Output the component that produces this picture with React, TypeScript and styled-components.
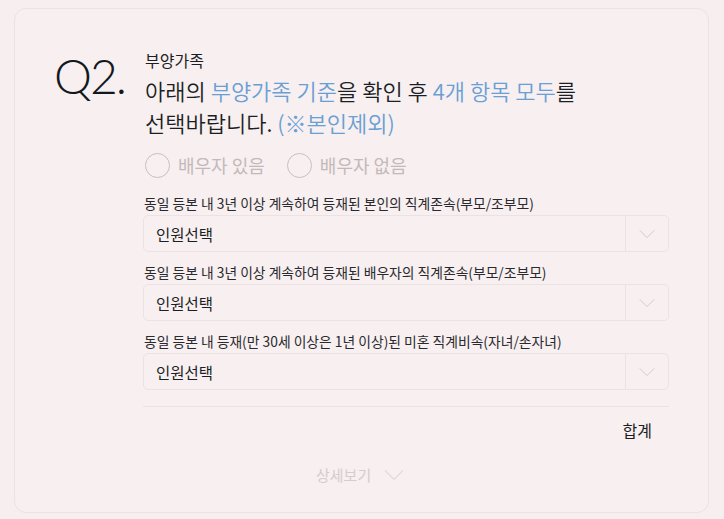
import React from "react";
import styled, { createGlobalStyle } from "styled-components";

const Global = createGlobalStyle`
  html, body { margin: 0; padding: 0; background: #f6eeef; }
  body { font-family: "Noto Sans CJK KR", "Noto Sans", sans-serif; color: #1b1f24; }
`;

const Page = styled.div`
  padding: 8px 14px 6px 14px;
`;

const Card = styled.div`
  width: 695px;
  height: 505px;
  box-sizing: border-box;
  border: 1px solid #ebe2e3;
  border-radius: 12px;
  background: #f7eff0;
  display: flex;
  padding: 40px 39px 0 39px;
`;

const QMark = styled.div`
  width: 89px;
  font-family: Lato, "Open Sans", sans-serif;
  font-weight: 300;
  font-size: 48px;
  line-height: 1;
  letter-spacing: -2px;
  color: #111820;
  padding-top: 3px;
  box-sizing: border-box;
`;

const Body = styled.div`
  flex: 1;
  display: flex;
  flex-direction: column;
`;

const Title = styled.div`
  font-size: 16px;
  font-weight: 400;
  line-height: 22px;
  padding-left: 2px;
`;

const Lead = styled.div`
  font-size: 22px;
  line-height: 32px;
  padding-left: 2px;
  margin-top: 3px;
  font-weight: 350;
`;

const Hi = styled.span`
  color: #6a9fd4;
`;

const Radios = styled.div`
  display: flex;
  gap: 22px;
  margin-top: 14px;
  padding-left: 2px;
  height: 26px;
  align-items: center;
`;

const RadioItem = styled.label`
  display: flex;
  align-items: center;
  gap: 8px;
  font-size: 18px;
  color: #c4b9b9;
`;

const Circle = styled.span`
  width: 25px;
  height: 25px;
  border-radius: 50%;
  border: 1px solid #c9c0c0;
  box-sizing: border-box;
`;

const Group = styled.div<{ $first?: boolean }>`
  margin-top: ${(p) => (p.$first ? "16px" : "11px")};
`;

const Label = styled.div`
  font-size: 13.8px;
  line-height: 18px;
  padding-left: 1px;
  color: #2a2a2e;
`;

const Select = styled.div`
  margin-top: 3px;
  height: 37px;
  box-sizing: border-box;
  border: 1px solid #ebe2e3;
  border-radius: 5px;
  display: flex;
  align-items: stretch;
`;

const SelectText = styled.div`
  flex: 1;
  display: flex;
  align-items: center;
  padding-left: 12px;
  font-size: 15.5px;
`;

const Arrow = styled.div`
  width: 42px;
  border-left: 1px solid #ebe2e3;
  display: flex;
  align-items: center;
  justify-content: center;
`;

const Divider = styled.div`
  height: 1px;
  background: #ebe2e3;
  margin-top: 16px;
`;

const Total = styled.div`
  text-align: right;
  font-size: 16px;
  line-height: 24px;
  font-weight: 400;
  padding-right: 17px;
  margin-top: 11px;
`;

const More = styled.div`
  margin-top: 22px;
  display: flex;
  align-items: center;
  gap: 13px;
  padding-left: 173px;
  font-size: 15px;
  line-height: 22px;
  color: #d6cccc;
`;

const Chevron = ({ color, w }: { color: string; w: number }) => (
  <svg width={w} height={w / 2 + 2} viewBox="0 0 20 11" fill="none">
    <path d="M1 1 L10 10 L19 1" stroke={color} strokeWidth="1.1" />
  </svg>
);

const groups = [
  "동일 등본 내 3년 이상 계속하여 등재된 본인의 직계존속(부모/조부모)",
  "동일 등본 내 3년 이상 계속하여 등재된 배우자의 직계존속(부모/조부모)",
  "동일 등본 내 등재(만 30세 이상은 1년 이상)된 미혼 직계비속(자녀/손자녀)",
];

export default function App() {
  return (
    <Page>
      <Global />
      <Card>
        <QMark>Q2.</QMark>
        <Body>
          <Title>부양가족</Title>
          <Lead>
            아래의 <Hi>부양가족 기준</Hi>을 확인 후 <Hi>4개 항목 모두</Hi>를
            <br />
            선택바랍니다. <Hi>(※본인제외)</Hi>
          </Lead>
          <Radios>
            <RadioItem>
              <Circle />
              배우자 있음
            </RadioItem>
            <RadioItem>
              <Circle />
              배우자 없음
            </RadioItem>
          </Radios>
          {groups.map((g, i) => (
            <Group key={g} $first={i === 0}>
              <Label>{g}</Label>
              <Select>
                <SelectText>인원선택</SelectText>
                <Arrow>
                  <Chevron color="#cfc6c6" w={16} />
                </Arrow>
              </Select>
            </Group>
          ))}
          <Divider />
          <Total>합계</Total>
          <More>
            상세보기
            <Chevron color="#e2d9d9" w={20} />
          </More>
        </Body>
      </Card>
    </Page>
  );
}
